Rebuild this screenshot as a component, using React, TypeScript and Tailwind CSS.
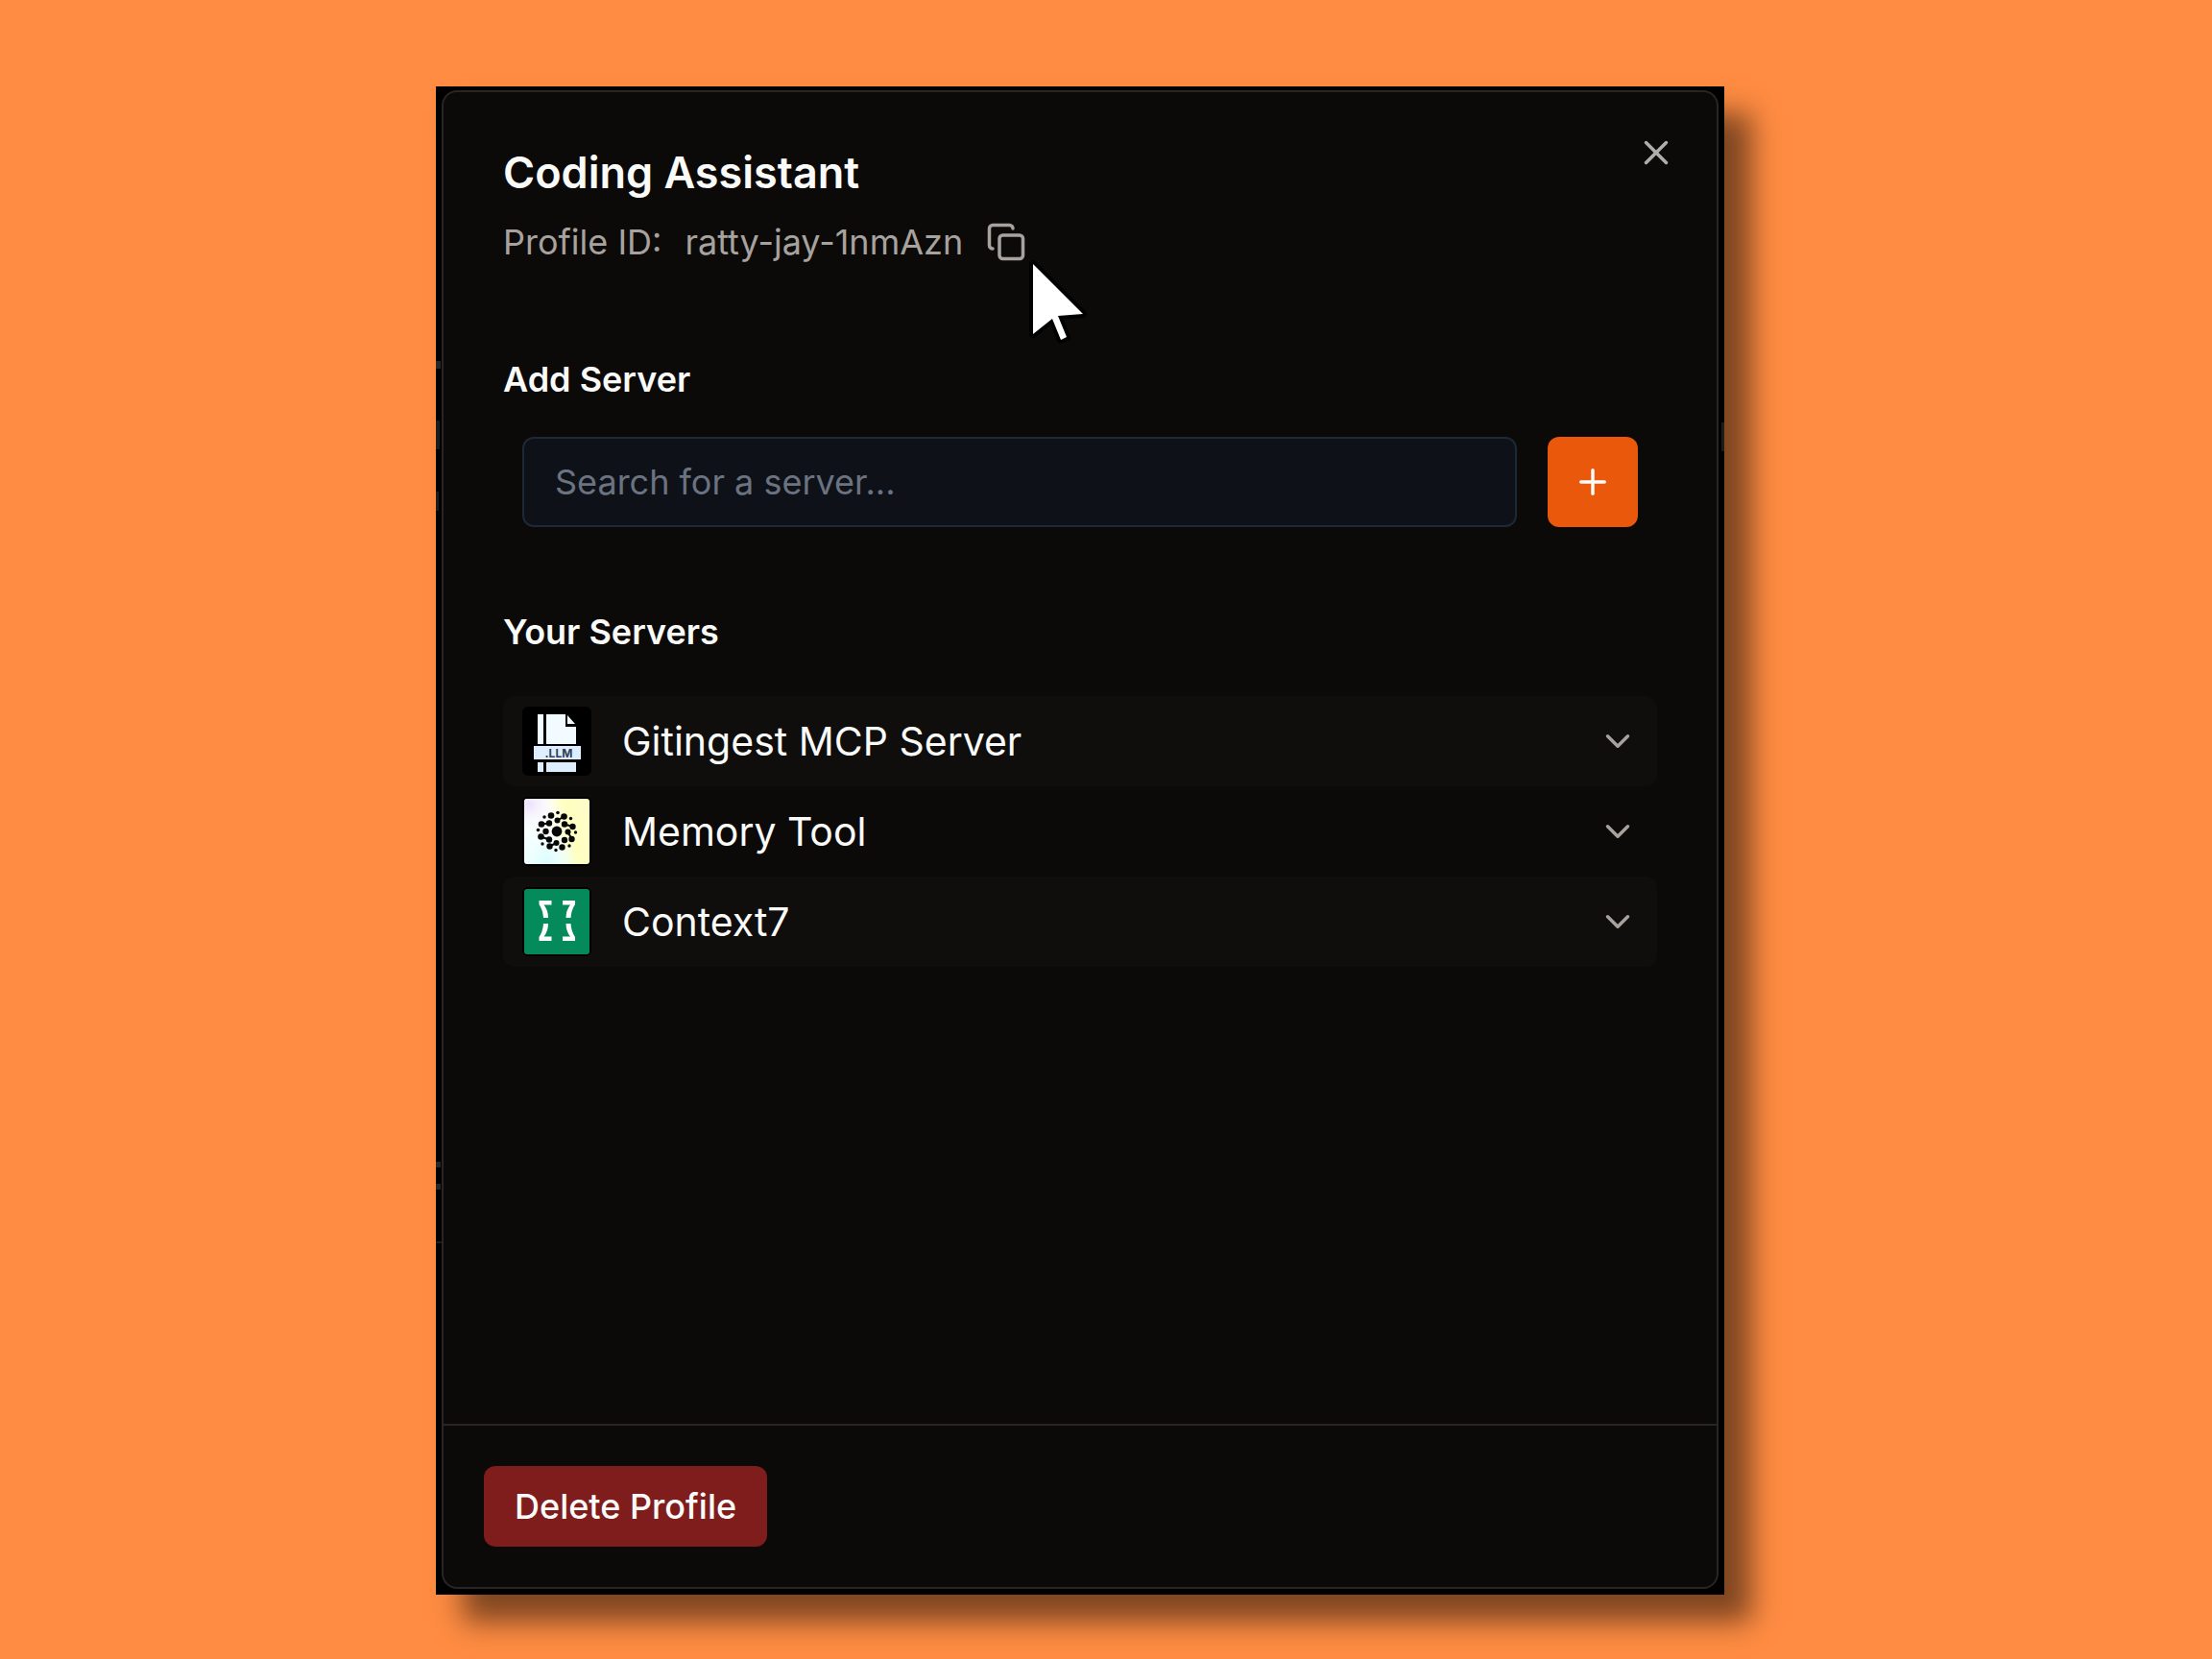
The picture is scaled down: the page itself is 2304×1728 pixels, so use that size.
import { ChevronDown, Copy, Plus, X } from 'lucide-react';
import type { ReactNode } from 'react';

function LlmFileLogo() {
  return (
    <svg viewBox="0 0 72 72" className="size-full" aria-hidden="true">
      <rect width="72" height="72" fill="#000" />
      <g fill="#f2fbff">
        <path d="M16 8h6v31h-6zM25 8h20v13h11v18H25zM47 9l8 9h-8z" />
        <path fill="#dceeff" d="M12 41h49v14H12zM16 58h6v10h-6zM25 58h31v10H25z" />
      </g>
      <text x="38" y="53" textAnchor="middle" fontSize="12" fontWeight="700" fontFamily="Inter, sans-serif" fill="#334155">
        .LLM
      </text>
    </svg>
  );
}

const memoryDots: [number, number, number][] = [
  [36, 36, 5.4],
  [36.5, 24.5, 3], [28, 27.500, 3.200], [44, 28.500, 3.200], [24.500, 36, 3.200], [47.500, 36.500, 3], [28, 44.500, 3.200], [44, 45, 3.200], [35.500, 48, 3],
  [30, 19.500, 3.300], [43.500, 20.500, 3.300], [20, 28.500, 3.300], [52.500, 31, 3.200], [19.500, 41.500, 3.300], [51.500, 44, 3.200], [28.500, 51.500, 3.200], [41.500, 52.500, 3.200],
  [37, 16.500, 1.800], [50.500, 22.500, 1.700], [23, 21, 1.800], [16.500, 34.500, 1.800], [55.500, 37, 1.700], [21, 49, 1.700], [49, 51, 1.700], [35, 55.500, 1.700],
];

function MemoryLogo() {
  return (
    <svg viewBox="0 0 72 72" className="size-full" aria-hidden="true">
      <defs>
        <linearGradient id="memory-base" x1="0" x2="1" y1="0.6" y2="0.4">
          <stop offset="0" stopColor="#f6ffff" />
          <stop offset="0.4" stopColor="#fefefe" />
          <stop offset="0.7" stopColor="#ffffbf" />
          <stop offset="1" stopColor="#fdfdc8" />
        </linearGradient>
        <radialGradient id="memory-lilac" cx="0.08" cy="0.08" r="0.45">
          <stop offset="0" stopColor="#ece2fc" />
          <stop offset="1" stopColor="#fff" stopOpacity="0" />
        </radialGradient>
        <radialGradient id="memory-aqua" cx="0.35" cy="0.95" r="0.5">
          <stop offset="0" stopColor="#ddfdff" />
          <stop offset="1" stopColor="#e8ffff" stopOpacity="0" />
        </radialGradient>
      </defs>
      <rect width="72" height="72" fill="#000" />
      <rect x="2" y="2" width="68" height="68" rx="3" fill="url(#memory-base)" />
      <rect x="2" y="2" width="68" height="68" rx="3" fill="url(#memory-lilac)" />
      <rect x="2" y="2" width="68" height="68" rx="3" fill="url(#memory-aqua)" />
      <path
        d="M36.500 24.500l7-4M44 28.500l8.500 2.500M20 28.500l8-1M47.500 36.500l4 7.500M19.500 41.500l8.500 3M28.500 51.500l7-3.500"
        stroke="#080808"
        strokeWidth="2"
      />
      {memoryDots.map(([cx, cy, r]) => (
        <circle key={`${cx}-${cy}`} cx={cx} cy={cy} r={r} fill="#080808" />
      ))}
    </svg>
  );
}

function ContextLogo() {
  const hook = 'M42 14h13v4q-4 6-4.500 14h-5q0-8 4.500-13.500h-8z';
  return (
    <svg viewBox="0 0 72 72" className="size-full" aria-hidden="true">
      <rect width="72" height="72" fill="#000" />
      <rect x="2" y="2" width="68" height="68" rx="3" fill="#058a5c" />
      <g fill="#fff">
        <path d={hook} />
        <path d={hook} transform="matrix(-1 0 0 1 72.500 0)" />
        <path d={hook} transform="matrix(1 0 0 -1 0 70)" />
        <path d={hook} transform="matrix(-1 0 0 -1 72.500 70)" />
      </g>
    </svg>
  );
}

function Pointer() {
  return (
    <svg
      viewBox="0 0 64 90"
      className="pointer-events-none absolute left-[44px] top-[36px] h-[90px] w-[64px]"
      aria-hidden="true"
    >
      <path
        d="M5 8L57 60l-26 2 9 22-6 3-9-22L5 81z"
        fill="#fff"
        stroke="#000"
        strokeWidth="8"
        paintOrder="stroke"
        strokeLinejoin="round"
      />
    </svg>
  );
}

function PageBehind() {
  return (
    <div aria-hidden="true">
      <span className="absolute left-0 top-[348px] h-[30px] w-[4px] bg-[#1c1c1c]" />
      <span className="absolute left-0 top-[422px] h-[20px] w-[3px] bg-[#1c1c1c]" />
      <span className="absolute left-0 top-[286px] h-[8px] w-[5px] bg-[#262626]" />
      <span className="absolute left-0 top-[1120px] h-[6px] w-[5px] bg-[#262626]" />
      <span className="absolute left-0 top-[1143px] h-[6px] w-[5px] bg-[#262626]" />
      <span className="absolute left-0 top-[1203px] h-[2px] w-[6px] bg-[#1c1c1c]" />
      <span className="absolute right-0 top-[350px] h-[30px] w-[3px] bg-[#1c1c1c]" />
    </div>
  );
}

function ServerRow({ name, logo }: { name: string; logo: ReactNode }) {
  return (
    <li className="rounded-xl odd:bg-[#0f0e0c]">
      <button type="button" className="flex h-[94px] w-full items-center gap-8 px-5 text-left">
        <span className="size-[72px] shrink-0 overflow-hidden rounded-md">{logo}</span>
        <span className="flex-1 text-[41px] leading-[60px]">{name}</span>
        <ChevronDown className="size-[42px] text-[#a8a29e]" />
      </button>
    </li>
  );
}

export default function App() {
  return (
    <main className="flex min-h-screen flex-col items-center bg-[#ff8c42] pb-[67px] pr-[54px] pt-[90px] font-['Inter',sans-serif] text-[#fafaf9]">
      <div className="relative flex w-full max-w-[1342px] flex-1 flex-col bg-black px-[6px] pb-[6px] pt-[4px] shadow-[28px_28px_28px_rgba(0,0,0,0.5)]">
        <PageBehind />
        <section
          aria-labelledby="profile-title"
          className="flex flex-1 flex-col rounded-2xl border-2 border-[#292524] bg-[#0c0a09]"
        >
          <div className="flex flex-1 flex-col px-[62px] pt-[42px]">
            <header className="flex items-start justify-between">
              <div className="pt-3">
                <h1 id="profile-title" className="text-[45px] font-semibold leading-[60px]">
                  Coding Assistant
                </h1>
                <div className="mt-[10px] flex h-[64px] items-center text-[36px] leading-[54px] text-[#a8a29e]">
                  <span>Profile ID:</span>
                  <span className="ml-6">ratty-jay-1nmAzn</span>
                  <span className="relative ml-6 flex">
                    <button type="button" aria-label="Copy profile ID">
                      <Copy className="size-[42px]" />
                    </button>
                    <Pointer />
                  </span>
                </div>
              </div>
              <button type="button" aria-label="Close" className="-mr-5 text-[#b0aeac]">
                <X className="size-[42px]" />
              </button>
            </header>

            <section className="mt-[84px]">
              <label htmlFor="server-search" className="block text-[36px] font-semibold leading-[54px]">
                Add Server
              </label>
              <div className="mt-[33px] flex gap-8 px-5">
                <input
                  id="server-search"
                  type="text"
                  placeholder="Search for a server..."
                  className="h-[94px] min-w-0 flex-1 rounded-xl border-2 border-[#1e2937] bg-[#0e1118] px-8 text-[36px] placeholder:text-[#6b7280]"
                />
                <button
                  type="button"
                  aria-label="Add server"
                  className="flex size-[94px] items-center justify-center rounded-xl bg-[#ea580c]"
                >
                  <Plus className="size-[42px]" />
                </button>
              </div>
            </section>

            <section className="mt-[82px]">
              <h2 className="text-[36px] font-semibold leading-[54px]">Your Servers</h2>
              <ul className="mt-[40px]">
                <ServerRow name="Gitingest MCP Server" logo={<LlmFileLogo />} />
                <ServerRow name="Memory Tool" logo={<MemoryLogo />} />
                <ServerRow name="Context7" logo={<ContextLogo />} />
              </ul>
            </section>
          </div>

          <footer className="border-t-2 border-[#292524] p-[42px]">
            <button
              type="button"
              className="block rounded-xl bg-[#7f1d1d] px-8 text-[36px] font-medium leading-[84px]"
            >
              Delete Profile
            </button>
          </footer>
        </section>
      </div>
    </main>
  );
}
